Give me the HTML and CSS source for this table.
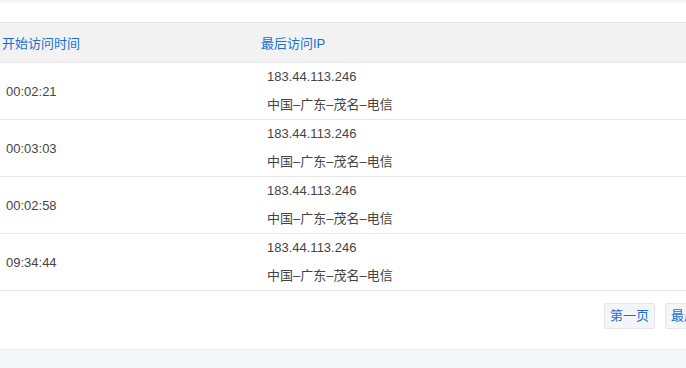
FILE: index.html
```html
<!DOCTYPE html>
<html lang="zh">
<head>
<meta charset="utf-8">
<link rel="stylesheet" href="styles.css">
</head>
<body>
<div class="top-strip"></div>
<div class="card">
  <div class="spacer"></div>
  <div class="table">
    <div class="row head">
      <div class="c1 h1">开始访问时间</div>
      <div class="c2 h2">最后访问IP</div>
    </div>
    <div class="row">
      <div class="c1 t">00:02:21</div>
      <div class="c2 ip"><div class="l">183.44.113.246</div><div class="l">中国–广东–茂名–电信</div></div>
    </div>
    <div class="row">
      <div class="c1 t">00:03:03</div>
      <div class="c2 ip"><div class="l">183.44.113.246</div><div class="l">中国–广东–茂名–电信</div></div>
    </div>
    <div class="row">
      <div class="c1 t">00:02:58</div>
      <div class="c2 ip"><div class="l">183.44.113.246</div><div class="l">中国–广东–茂名–电信</div></div>
    </div>
    <div class="row">
      <div class="c1 t">09:34:44</div>
      <div class="c2 ip"><div class="l">183.44.113.246</div><div class="l">中国–广东–茂名–电信</div></div>
    </div>
  </div>
  <div class="pager">
    <span class="btn">第一页</span>
    <span class="btn">最后一页</span>
  </div>
</div>
<div class="bottom"></div>
</body>
</html>
```
FILE: styles.css
```css
html, body {
  margin: 0;
  padding: 0;
  width: 686px;
  height: 368px;
  overflow: hidden;
  background: #ffffff;
  font-family: "Liberation Sans", "Noto Sans CJK SC", sans-serif;
  font-size: 13px;
}
.top-strip {
  height: 3px;
  background: linear-gradient(#f3f3f3, #f7f7f7);
}
.card {
  background: #fff;
}
.spacer {
  height: 19px;
}
.table {
  width: 100%;
}
.row {
  display: flex;
  border-bottom: 1px solid #e6e6e6;
}
.head {
  background: #f2f2f2;
  border-top: 1px solid #e6e6e6;
  height: 39px;
  align-items: center;
}
.head .c1, .head .c2 {
  color: #1a6fd1;
}
.c1 {
  width: 261px;
  flex: none;
}
.h1 { padding-left: 2px; width: 259px; }
.h2 { padding-left: 0; }
.t {
  color: #444;
  padding-left: 6px;
  width: 255px;
  display: flex;
  align-items: center;
  height: 56px;
}
.ip {
  padding-left: 6px;
  color: #444;
}
.l {
  height: 28px;
  line-height: 28px;
}
.pager {
  display: flex;
  gap: 10px;
  padding: 12px 0 0 604px;
  height: 58px;
  white-space: nowrap;
  box-sizing: border-box;
  overflow: hidden;
}
.btn {
  flex: none;
  height: 26px;
  line-height: 24px;
  box-sizing: border-box;
  padding: 0 5px;
  border: 1px solid #e4e6e9;
  border-radius: 2px;
  background: #f4f5f7;
  color: #1a6fd1;
}
.bottom {
  height: 19px;
  background: #f6f7f9;
  border-top: 1px solid #eceef1;
}
```
